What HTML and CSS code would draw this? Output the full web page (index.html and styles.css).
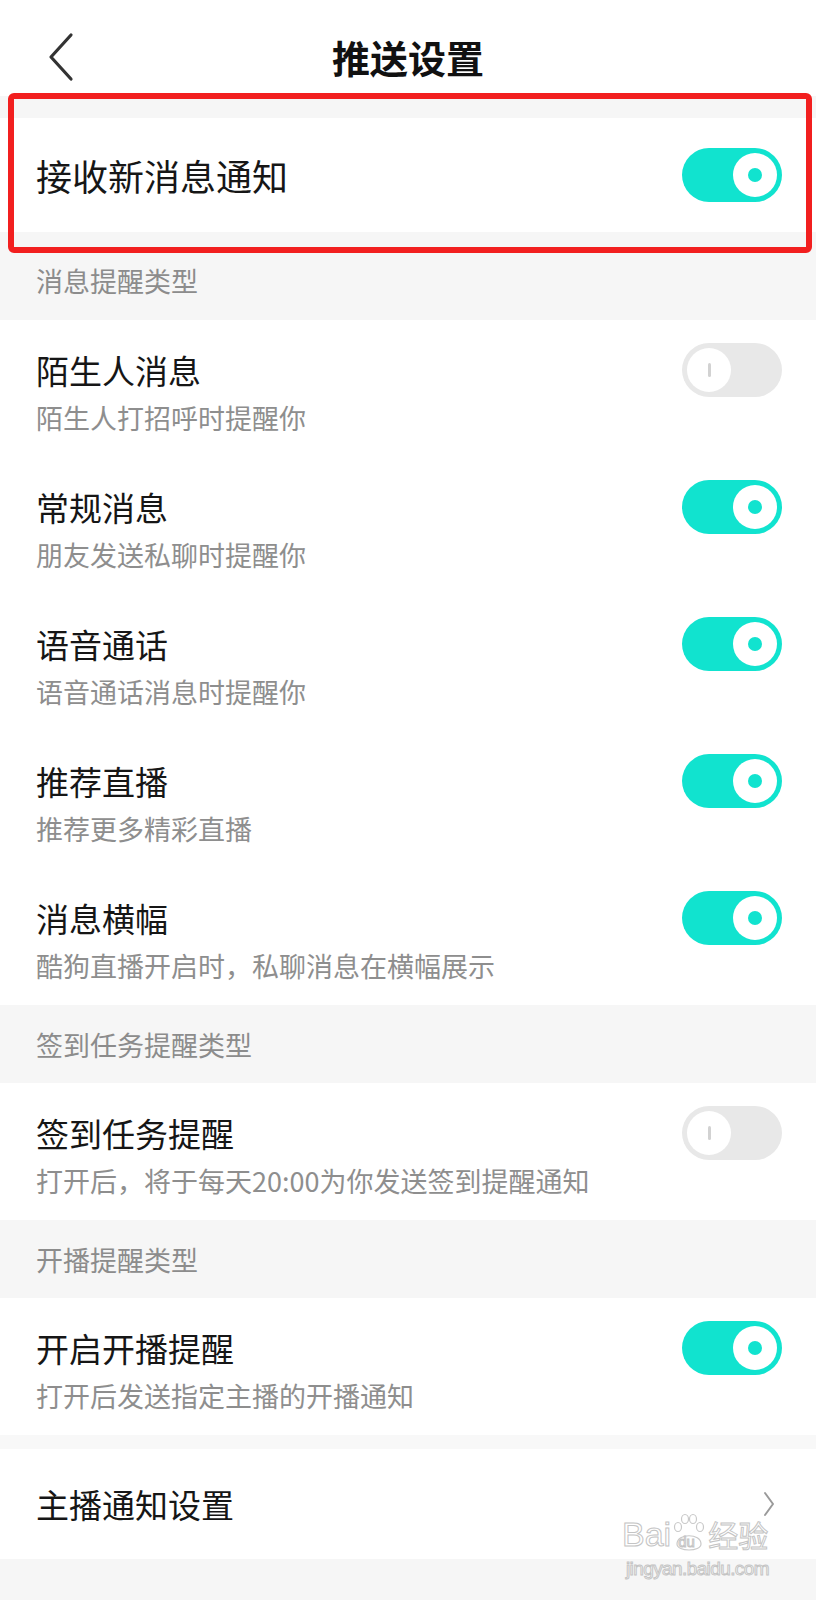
FILE: index.html
```html
<!DOCTYPE html>
<html lang="zh-CN">
<head>
  <meta charset="UTF-8">
  <meta name="viewport" content="width=device-width, initial-scale=1.0">
  <title>推送设置</title>
  <link rel="stylesheet" href="styles.css">
</head>
<body>
  <header class="topbar">
    <a class="back" href="#">
      <svg width="30" height="50" viewBox="0 0 30 50">
        <path d="M25 3 L5 25 L25 47" fill="none" stroke="#333" stroke-width="3.2" stroke-linecap="round" stroke-linejoin="round"/>
      </svg>
    </a>
    <h1>推送设置</h1>
    <span></span>
  </header>

  <div class="spacer"></div>

  <!-- Master switch -->
  <div class="row row-main">
    <div class="row-title row-title-lg">接收新消息通知</div>
    <span class="switch is-on"><span class="knob"></span></span>
  </div>

  <div class="group-title group-title-first">消息提醒类型</div>
  <div class="row">
    <div class="row-text">
      <div class="row-title">陌生人消息</div>
      <div class="row-sub">陌生人打招呼时提醒你</div>
    </div>
    <span class="switch"><span class="knob"></span></span>
  </div>
  <div class="row">
    <div class="row-text">
      <div class="row-title">常规消息</div>
      <div class="row-sub">朋友发送私聊时提醒你</div>
    </div>
    <span class="switch is-on"><span class="knob"></span></span>
  </div>
  <div class="row">
    <div class="row-text">
      <div class="row-title">语音通话</div>
      <div class="row-sub">语音通话消息时提醒你</div>
    </div>
    <span class="switch is-on"><span class="knob"></span></span>
  </div>
  <div class="row">
    <div class="row-text">
      <div class="row-title">推荐直播</div>
      <div class="row-sub">推荐更多精彩直播</div>
    </div>
    <span class="switch is-on"><span class="knob"></span></span>
  </div>
  <div class="row">
    <div class="row-text">
      <div class="row-title">消息横幅</div>
      <div class="row-sub">酷狗直播开启时，私聊消息在横幅展示</div>
    </div>
    <span class="switch is-on"><span class="knob"></span></span>
  </div>

  <div class="group-title">签到任务提醒类型</div>
  <div class="row">
    <div class="row-text">
      <div class="row-title">签到任务提醒</div>
      <div class="row-sub">打开后，将于每天20:00为你发送签到提醒通知</div>
    </div>
    <span class="switch"><span class="knob"></span></span>
  </div>

  <div class="group-title">开播提醒类型</div>
  <div class="row">
    <div class="row-text">
      <div class="row-title">开启开播提醒</div>
      <div class="row-sub">打开后发送指定主播的开播通知</div>
    </div>
    <span class="switch is-on"><span class="knob"></span></span>
  </div>

  <div class="divider"></div>

  <a class="row row-link" href="#">
    <div class="row-title">主播通知设置</div>
    <svg width="14" height="28" viewBox="0 0 14 28">
      <path d="M3 3 L11 14 L3 25" fill="none" stroke="#9a9a9a" stroke-width="2" stroke-linecap="round" stroke-linejoin="round"/>
    </svg>
  </a>

  <!-- annotation box drawn over the first row -->
  <div class="highlight"></div>

  <!-- watermark -->
  <div class="watermark">
    <div class="wm-brand">
      <span>Bai</span>
      <span class="wm-paw">
        <svg width="34" height="42" viewBox="0 0 34 42">
          <g fill="#fff" stroke="#c9c9c9" stroke-width="1.2">
            <ellipse cx="6" cy="15" rx="3.5" ry="4.5"/>
            <ellipse cx="13" cy="7" rx="3.5" ry="4.5"/>
            <ellipse cx="21" cy="7" rx="3.5" ry="4.5"/>
            <ellipse cx="28" cy="15" rx="3.5" ry="4.5"/>
            <path d="M5 32 C5 21 29 21 29 32 C29 40 5 40 5 32 Z"/>
          </g>
        </svg>
        <span class="wm-du">du</span>
      </span>
      <span class="wm-cn">经验</span>
    </div>
    <div class="wm-url">jingyan.baidu.com</div>
  </div>
</body>
</html>
```

FILE: styles.css
```css
/* General styles */
body {
  margin: 0;
  width: 816px;
  min-height: 1600px;
  background-color: #f6f6f6;
  font-family: "Noto Sans CJK SC", "Noto Sans", sans-serif;
  color: #1a1a1a;
  position: relative;
}

a {
  color: inherit;
  text-decoration: none;
}

/* Top bar */
.topbar {
  display: grid;
  grid-template-columns: 1fr auto 1fr;
  align-items: center;
  height: 78px;
  padding-top: 18px;
  background-color: #fff;
}

.back {
  display: flex;
  padding-left: 46px;
}

.topbar h1 {
  margin: 0;
  font-size: 38px;
  font-weight: 700;
  line-height: 50px;
  color: #111;
}

.spacer {
  height: 22px;
}

.divider {
  height: 14px;
  background-color: #f8f8f8;
}

/* Section titles */
.group-title {
  display: flex;
  align-items: center;
  height: 78px;
  padding-left: 36px;
  font-size: 27px;
  color: #8c8c8c;
}

.group-title-first {
  height: 80px;
  padding-top: 8px;
}

/* Rows */
.row {
  display: flex;
  justify-content: space-between;
  align-items: flex-start;
  height: 137px;
  box-sizing: border-box;
  padding: 30px 34px 0 36px;
  background-color: #fff;
}

.row-main {
  height: 114px;
  padding-top: 0;
  align-items: center;
}

.row-link {
  height: 110px;
  padding-top: 0;
  padding-right: 40px;
  align-items: center;
}

.row-title {
  font-size: 33px;
  line-height: 40px;
  color: #161616;
}

.row-title-lg {
  font-size: 36px;
}

.row-sub {
  margin-top: 10px;
  font-size: 27px;
  line-height: 36px;
  color: #8e8e8e;
}

/* Switch */
.switch {
  display: flex;
  align-items: center;
  width: 100px;
  height: 54px;
  margin-top: -7px;
  padding: 0 5px;
  box-sizing: border-box;
  border-radius: 27px;
  background-color: #e8e8e8;
}

.row-main .switch {
  margin-top: 0;
}

.switch.is-on {
  justify-content: flex-end;
  background-color: #11e3cf;
}

.knob {
  display: flex;
  align-items: center;
  justify-content: center;
  width: 44px;
  height: 44px;
  border-radius: 50%;
  background-color: #fff;
}

.knob::after {
  content: "";
  width: 3px;
  height: 14px;
  border-radius: 2px;
  background-color: #d2d2d2;
}

.is-on .knob::after {
  width: 14px;
  height: 14px;
  border-radius: 50%;
  background-color: #11e3cf;
}

/* Red annotation box */
.highlight {
  position: absolute;
  left: 8px;
  top: 93px;
  width: 792px;
  height: 148px;
  border: 6px solid #f21f1f;
  border-radius: 6px;
}

/* Watermark */
.watermark {
  position: absolute;
  left: 622px;
  top: 1512px;
  white-space: nowrap;
  color: #fff;
  -webkit-text-stroke: 1px #c4c4c4;
  font-family: "Liberation Sans", "Noto Sans CJK SC", sans-serif;
}

.wm-brand {
  display: flex;
  align-items: flex-end;
  font-size: 34px;
  line-height: 40px;
}

.wm-paw {
  position: relative;
  display: inline-flex;
  width: 34px;
  height: 42px;
  margin: 0 2px 0 1px;
}

.wm-paw svg {
  position: absolute;
  left: 0;
  bottom: 0;
}

.wm-du {
  position: absolute;
  left: 6px;
  bottom: 3px;
  font-size: 15px;
  line-height: 18px;
}

.wm-cn {
  font-family: "Noto Sans CJK SC", sans-serif;
  font-size: 30px;
  line-height: 40px;
}

.wm-url {
  margin-top: 4px;
  padding-left: 4px;
  font-size: 19px;
  line-height: 22px;
  letter-spacing: -0.6px;
}
```
